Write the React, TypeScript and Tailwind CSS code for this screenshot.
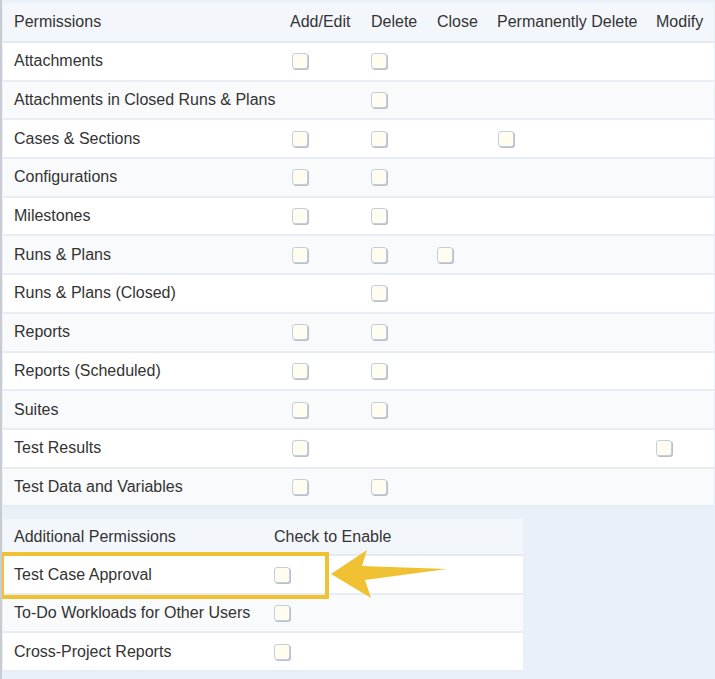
import React from "react";

const rows: [string, boolean[]][] = [
  ["Attachments", [true, true, false, false, false]],
  ["Attachments in Closed Runs & Plans", [false, true, false, false, false]],
  ["Cases & Sections", [true, true, false, true, false]],
  ["Configurations", [true, true, false, false, false]],
  ["Milestones", [true, true, false, false, false]],
  ["Runs & Plans", [true, true, true, false, false]],
  ["Runs & Plans (Closed)", [false, true, false, false, false]],
  ["Reports", [true, true, false, false, false]],
  ["Reports (Scheduled)", [true, true, false, false, false]],
  ["Suites", [true, true, false, false, false]],
  ["Test Results", [true, false, false, false, true]],
  ["Test Data and Variables", [true, true, false, false, false]],
];

const Box = () => (
  <div className="w-4 h-4 rounded-[3px] border border-[#c5cde0] bg-[#fffdf0] shadow-[1px_1px_0_#b8bfcc]" />
);

const cols = "grid grid-cols-[287px_81px_66px_60px_159px_1fr]";

export default function App() {
  return (
    <div className="w-[715px] h-[679px] bg-[#e9f0f8] border-l-2 border-[#c8ccd2] text-[16px] text-[#333] overflow-hidden" style={{ fontFamily: "Arial, 'Liberation Sans', sans-serif" }}>
      <div className="ml-px mt-[3px] w-[711px] bg-white">
        <div className={`${cols} h-[40px] items-center bg-[#f3f7fc] border-b-2 border-[#e4eaf2]`}>
          <div className="pl-[11px]">Permissions</div>
          <div>Add/Edit</div>
          <div>Delete</div>
          <div>Close</div>
          <div>Permanently Delete</div>
          <div>Modify</div>
        </div>
        {rows.map(([label, c], i) => (
          <div key={label} className={`${cols} h-[38.7px] items-center border-b-2 border-[#e8edf4] ${i % 2 ? "bg-[#f9fafb]" : "bg-white"}`}>
            <div className="pl-[11px]">{label}</div>
            {c.map((v, j) => (
              <div key={j} className={j === 0 ? "pl-[2px]" : j === 3 ? "pl-px" : ""}>{v && <Box />}</div>
            ))}
          </div>
        ))}
      </div>
      <div className="relative ml-px mt-[12px] w-[520px] bg-white">
        <div className="grid grid-cols-[271px_1fr] h-[37px] items-center bg-[#f3f7fc] border-b-2 border-[#e4eaf2]">
          <div className="pl-[11px]">Additional Permissions</div>
          <div>Check to Enable</div>
        </div>
        {["Test Case Approval", "To-Do Workloads for Other Users", "Cross-Project Reports"].map((l, i) => (
          <div key={l} className={`grid grid-cols-[271px_1fr] h-[38.5px] items-center border-b-2 border-[#e8edf4] ${i % 2 ? "bg-[#f9fafb]" : "bg-white"}`}>
            <div className="pl-[11px]">{l}</div>
            <div><Box /></div>
          </div>
        ))}
        <div className="absolute left-[-3px] top-[33px] w-[329px] h-[47px] border-[4px] border-[#f0c132]" />
        <svg className="absolute left-[322px] top-[29px]" width="125" height="52" viewBox="0 0 125 52">
          <polygon points="6,26 42,2 37,18 122,21 40,32 46,50" fill="#f0c132" />
        </svg>
      </div>
    </div>
  );
}
